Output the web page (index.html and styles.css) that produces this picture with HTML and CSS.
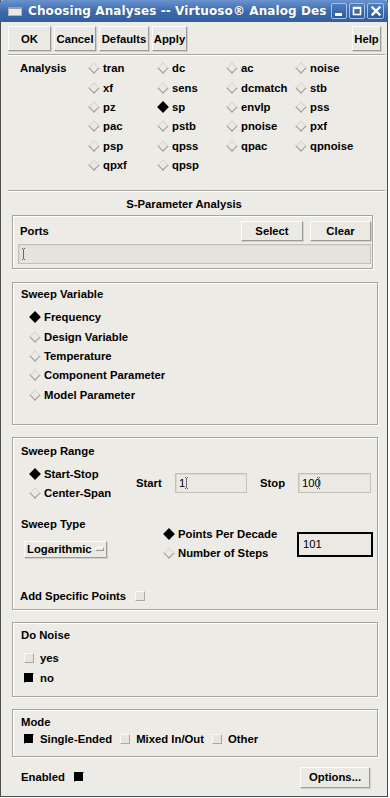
FILE: index.html
```html
<!DOCTYPE html>
<html lang="en">
<head>
  <meta charset="UTF-8">
  <title>Choosing Analyses</title>
  <link rel="stylesheet" href="styles.css">
</head>
<body>

  <div class="window">
    <div class="titlebar">
      <span class="win-icon"></span>
      <span class="title">Choosing Analyses -- Virtuoso® Analog Des</span>
      <div class="wm-buttons">
        <span class="wm-btn"><svg width="14" height="14" viewBox="0 0 14 14"><rect x="3" y="9" width="7" height="3" fill="#fff"/></svg></span>
        <span class="wm-btn"><svg width="14" height="14" viewBox="0 0 14 14"><rect x="3.5" y="3.5" width="7" height="7" fill="none" stroke="#fff" stroke-width="1.6"/><rect x="3" y="3" width="8" height="2" fill="#fff"/></svg></span>
        <span class="wm-btn"><svg width="14" height="14" viewBox="0 0 14 14"><path d="M3.5 3.5 L10.5 10.5 M10.5 3.5 L3.5 10.5" stroke="#fff" stroke-width="2.4" stroke-linecap="square"/></svg></span>
      </div>
    </div>

    <div class="toolbar">
      <button class="btn w-ok">OK</button>
      <button class="btn w-cancel">Cancel</button>
      <button class="btn w-defaults">Defaults</button>
      <button class="btn w-apply">Apply</button>
      <span class="spacer"></span>
      <button class="btn w-help">Help</button>
    </div>

    <div class="sep sep-top"></div>

    <div class="analysis">
      <div class="analysis-label">Analysis</div>
      <div class="radio"><span class="dia"><i></i></span>tran</div>
      <div class="radio"><span class="dia"><i></i></span>dc</div>
      <div class="radio"><span class="dia"><i></i></span>ac</div>
      <div class="radio"><span class="dia"><i></i></span>noise</div>
      <div class="radio col-first"><span class="dia"><i></i></span>xf</div>
      <div class="radio"><span class="dia"><i></i></span>sens</div>
      <div class="radio"><span class="dia"><i></i></span>dcmatch</div>
      <div class="radio"><span class="dia"><i></i></span>stb</div>
      <div class="radio col-first"><span class="dia"><i></i></span>pz</div>
      <div class="radio on"><span class="dia"><i></i></span>sp</div>
      <div class="radio"><span class="dia"><i></i></span>envlp</div>
      <div class="radio"><span class="dia"><i></i></span>pss</div>
      <div class="radio col-first"><span class="dia"><i></i></span>pac</div>
      <div class="radio"><span class="dia"><i></i></span>pstb</div>
      <div class="radio"><span class="dia"><i></i></span>pnoise</div>
      <div class="radio"><span class="dia"><i></i></span>pxf</div>
      <div class="radio col-first"><span class="dia"><i></i></span>psp</div>
      <div class="radio"><span class="dia"><i></i></span>qpss</div>
      <div class="radio"><span class="dia"><i></i></span>qpac</div>
      <div class="radio"><span class="dia"><i></i></span>qpnoise</div>
      <div class="radio col-first"><span class="dia"><i></i></span>qpxf</div>
      <div class="radio"><span class="dia"><i></i></span>qpsp</div>
    </div>

    <div class="sep sep-mid"></div>

    <div class="form-title">S-Parameter Analysis</div>

    <div class="group ports">
      <div class="ports-row">
        <span class="ports-label">Ports</span>
        <button class="btn w-select">Select</button>
        <button class="btn w-clear">Clear</button>
      </div>
      <div class="field ports-field"><span class="ibeam"></span></div>
    </div>

    <div class="group sweep-var">
      <div class="group-label">Sweep Variable</div>
      <div class="radio-list">
        <div class="radio on"><span class="dia"><i></i></span>Frequency</div>
        <div class="radio"><span class="dia"><i></i></span>Design Variable</div>
        <div class="radio"><span class="dia"><i></i></span>Temperature</div>
        <div class="radio"><span class="dia"><i></i></span>Component Parameter</div>
        <div class="radio"><span class="dia"><i></i></span>Model Parameter</div>
      </div>
    </div>

    <div class="group sweep-range">
      <div class="group-label">Sweep Range</div>
      <div class="range-row">
        <div class="range-radios">
          <div class="radio on"><span class="dia"><i></i></span>Start-Stop</div>
          <div class="radio"><span class="dia"><i></i></span>Center-Span</div>
        </div>
        <span class="lbl lbl-start">Start</span>
        <div class="field value-field f-start">1<span class="ibeam"></span></div>
        <span class="lbl lbl-stop">Stop</span>
        <div class="field value-field f-stop">100<span class="ibeam back"></span></div>
      </div>
      <div class="type-row">
        <div class="type-left">
          <div class="type-label">Sweep Type</div>
          <button class="btn optmenu">Logarithmic<span class="ind"></span></button>
        </div>
        <div class="type-radios">
          <div class="radio on"><span class="dia"><i></i></span>Points Per Decade</div>
          <div class="radio"><span class="dia"><i></i></span>Number of Steps</div>
        </div>
        <div class="field points-field">101</div>
      </div>
      <div class="specific">
        <span>Add Specific Points</span>
        <span class="chk"></span>
      </div>
    </div>

    <div class="group noise">
      <div class="group-label">Do Noise</div>
      <div class="check-list">
        <div class="check"><span class="chk"></span>yes</div>
        <div class="check"><span class="chk on"></span>no</div>
      </div>
    </div>

    <div class="group mode">
      <div class="group-label">Mode</div>
      <div class="mode-row">
        <div class="check"><span class="chk on"></span>Single-Ended</div>
        <div class="check"><span class="chk"></span>Mixed In/Out</div>
        <div class="check"><span class="chk"></span>Other</div>
      </div>
    </div>

    <div class="footer">
      <span>Enabled</span>
      <span class="chk on enabled-chk"></span>
      <span class="spacer"></span>
      <button class="btn w-options">Options...</button>
    </div>
  </div>

</body>
</html>
```

FILE: styles.css
```css
/* General Styles */
* {
  box-sizing: border-box;
}

body {
  margin: 0;
  background-color: #ffffff;
  font-family: 'Liberation Sans', Arial, sans-serif;
  font-size: 11.3px;
  font-weight: bold;
  color: #000;
}

.window {
  width: 388px;
  height: 797px;
  background-color: #edebe6;
  border: 1px solid #4d4d4d;
  border-top: none;
}

/* Title bar */
.titlebar {
  height: 22px;
  display: flex;
  align-items: center;
  background: linear-gradient(#6893cf, #3b68aa 55%, #335f9f);
  border-radius: 4px 4px 0 0;
  margin: 0 -1px;
  padding-left: 8px;
}

.win-icon {
  width: 14px;
  height: 9px;
  background-color: #e9e9e9;
  border: 1px solid #b4b4b4;
  border-top: 2px solid #9d9d9d;
  margin-right: 6px;
}

.title {
  flex: 1;
  overflow: hidden;
  white-space: nowrap;
  font-family: 'DejaVu Sans', sans-serif;
  font-size: 12px;
  color: #fff;
  letter-spacing: 0.1px;
  text-shadow: 0 0 1px rgba(0, 0, 0, 0.3);
}

.wm-buttons {
  display: flex;
  gap: 2px;
  padding: 0 4px 0 3px;
}

.wm-btn {
  width: 16px;
  height: 16px;
  display: flex;
  align-items: center;
  justify-content: center;
  background: linear-gradient(#4d7dc0, #2e5a9c);
  border: 1px solid #a7c1e6;
  border-radius: 2px;
}

.wm-btn:last-child {
  width: 17px;
}

/* Buttons */
.btn {
  font: inherit;
  color: #000;
  height: 25px;
  padding: 0;
  background-color: #ebe9e4;
  border: 1px solid;
  border-color: #fbfbfa #9e9c97 #9e9c97 #fbfbfa;
  box-shadow: 1px 1px 0 #d1cfca;
}

.toolbar {
  display: flex;
  gap: 2px;
  padding: 4px 6px 0 7px;
}

.spacer {
  flex: 1;
}

.w-ok { width: 43px; }
.w-cancel { width: 42px; margin-left: 1px; }
.w-defaults { width: 50px; margin-left: 1px; }
.w-apply { width: 35px; margin-left: 1px; }
.w-help { width: 29px; }

.sep {
  height: 2px;
  border-top: 1px solid #a8a6a1;
  border-bottom: 1px solid #ffffff;
  margin-left: 7px;
  margin-right: 2px;
}

.sep-top { margin-top: 3px; }
.sep-mid { margin-top: 15px; }

/* Analysis grid */
.analysis {
  display: grid;
  grid-template-columns: 68px repeat(4, 69px);
  grid-auto-rows: 19.4px;
  padding: 2.5px 0 0 19px;
}

.analysis-label {
  display: flex;
  align-items: center;
}

.col-first {
  grid-column: 2;
}

.radio {
  display: flex;
  align-items: center;
  white-space: nowrap;
}

.dia {
  width: 12px;
  height: 12px;
  display: flex;
  align-items: center;
  justify-content: center;
  margin-right: 3px;
}

.dia i {
  width: 8px;
  height: 8px;
  transform: rotate(45deg);
  background-color: #ebe9e5;
  border: 1px solid;
  border-color: #d8d6d1 #9c9a95 #9c9a95 #d8d6d1;
}

.radio.on .dia i {
  background-color: #000;
  border-color: #000;
}

.form-title {
  margin-top: 5px;
  line-height: 14px;
  text-align: center;
  padding-right: 20px;
}

/* Framed groups */
.group {
  margin-left: 11px;
  width: 366px;
  border: 1px solid #a6a49f;
  box-shadow: inset 1px 1px 0 #fff, 1px 1px 0 #fff;
}

.group-label {
  line-height: 14px;
  padding-left: 8px;
}

.ports {
  margin-top: 4px;
  width: 361px;
  height: 54px;
  padding: 5px 1px 0 5px;
}

.ports-row {
  display: flex;
  align-items: center;
  height: 20px;
}

.ports-label {
  flex: 1;
  margin-left: 2px;
}

.w-select { width: 62px; height: 20px; }
.w-clear { width: 61px; height: 20px; margin-left: 7px; }

.field {
  background-color: #ebe9e4;
  border: 1px solid #c3c0bb;
  box-shadow: inset 1px 1px 0 #dad8d3;
  font-weight: normal;
  display: flex;
  align-items: center;
  padding-left: 3px;
}

.ports-field {
  margin-top: 3px;
  height: 20px;
  background-color: #e5e3de;
}

.ibeam {
  display: inline-block;
  width: 3px;
  height: 12px;
  border-top: 1px dotted #555;
  border-bottom: 1px dotted #555;
  background: linear-gradient(#666, #666) center / 1px 100% no-repeat;
}

.ibeam.back {
  margin-left: -4px;
}

.sweep-var {
  margin-top: 13px;
  height: 143px;
  padding-top: 4px;
}

.radio-list {
  margin-top: 7px;
  padding-left: 16px;
  display: grid;
  grid-auto-rows: 19.3px;
}

.sweep-range {
  margin-top: 12px;
  height: 173px;
  padding-top: 6px;
}

.range-row {
  display: flex;
  align-items: center;
  margin-top: 6px;
}

.range-radios {
  width: 107px;
  margin-left: 16px;
  display: grid;
  grid-auto-rows: 19.5px;
}

.lbl-start { width: 39px; }
.lbl-stop { width: 38px; margin-left: 13px; }

.value-field {
  height: 20px;
}

.f-start { width: 72px; }
.f-stop { width: 73px; }

.type-row {
  display: flex;
  height: 47px;
  margin-top: 14px;
}

.type-left {
  width: 150px;
  padding-left: 8px;
}

.type-label {
  line-height: 14px;
}

.optmenu {
  margin: 10px 0 0 3px;
  width: 83px;
  height: 17px;
  display: flex;
  align-items: center;
  padding-left: 2px;
}

.ind {
  width: 9px;
  height: 4px;
  margin-left: 3px;
  border: 1px solid;
  border-color: #fff #9e9c97 #9e9c97 #fff;
}

.type-radios {
  width: 134px;
  margin-top: 7px;
  display: grid;
  grid-auto-rows: 19.5px;
}

.points-field {
  width: 76px;
  height: 25px;
  margin-top: 15px;
  border: 2px solid #000;
  box-shadow: none;
  padding-left: 4px;
}

.specific {
  display: flex;
  align-items: center;
  gap: 9px;
  margin-top: 25px;
  line-height: 14px;
  padding-left: 7px;
}

/* Checkboxes */
.chk {
  width: 10px;
  height: 10px;
  background-color: #e7e5e0;
  border: 1px solid;
  border-color: #f9f9f7 #a9a7a2 #a9a7a2 #f9f9f7;
}

.chk.on {
  background-color: #000;
  border-color: #000 #eee #eee #000;
}

.check {
  display: flex;
  align-items: center;
  gap: 6px;
  white-space: nowrap;
}

.noise {
  margin-top: 12px;
  height: 75px;
  padding-top: 5px;
}

.check-list {
  margin-top: 6px;
  padding-left: 11px;
  display: grid;
  grid-auto-rows: 20px;
}

.mode {
  margin-top: 12px;
  height: 48px;
  padding-top: 5px;
}

.mode-row {
  display: flex;
  align-items: center;
  gap: 8px;
  height: 14px;
  margin-top: 3px;
  padding-left: 11px;
}

.footer {
  display: flex;
  align-items: center;
  height: 21px;
  margin-top: 10px;
  padding: 0 17px 0 20px;
}

.enabled-chk {
  margin-left: 9px;
}

.w-options {
  width: 70px;
  height: 21px;
}
```
